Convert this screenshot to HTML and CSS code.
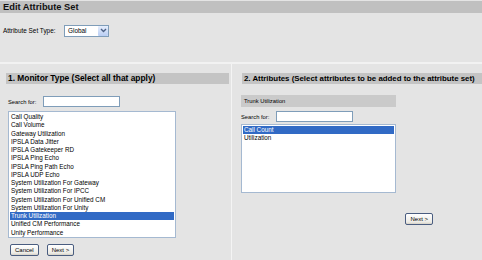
FILE: index.html
```html
<!DOCTYPE html>
<html>
<head>
  <title>Edit Attribute Set</title>
  <link rel="stylesheet" href="styles.css">
</head>
<body>

<div class="titlebar">Edit Attribute Set</div>

<div class="typerow">
  <span class="label">Attribute Set Type:</span>
  <div class="select">
    <span class="select-text">Global</span>
    <span class="select-arrow">
      <svg width="9" height="9" viewBox="0 0 9 9"><path d="M2 3 L4.5 5.5 L7 3" fill="none" stroke="#4d6185" stroke-width="1.4"/></svg>
    </span>
  </div>
</div>

<div class="panels">
  <!-- Left: monitor types -->
  <div class="panel left">
    <div class="panel-head">1. Monitor Type (Select all that apply)</div>
    <div class="search">
      <span class="label">Search for:</span>
      <input type="text" class="search-box wide">
    </div>
    <ul class="listbox big">
      <li>Call Quality</li>
      <li>Call Volume</li>
      <li>Gateway Utilization</li>
      <li>IPSLA Data Jitter</li>
      <li>IPSLA Gatekeeper RD</li>
      <li>IPSLA Ping Echo</li>
      <li>IPSLA Ping Path Echo</li>
      <li>IPSLA UDP Echo</li>
      <li>System Utilization For Gateway</li>
      <li>System Utilization For IPCC</li>
      <li>System Utilization For Unified CM</li>
      <li>System Utilization For Unity</li>
      <li class="sel">Trunk Utilization</li>
      <li>Unified CM Performance</li>
      <li>Unity Performance</li>
    </ul>
    <div class="buttons">
      <button type="button" class="btn">Cancel</button>
      <button type="button" class="btn">Next &gt;</button>
    </div>
  </div>

  <!-- Right: attributes -->
  <div class="panel right">
    <div class="panel-head">2. Attributes (Select attributes to be added to the attribute set)</div>
    <div class="subhead">Trunk Utilization</div>
    <div class="search">
      <span class="label">Search for:</span>
      <input type="text" class="search-box">
    </div>
    <ul class="listbox small">
      <li class="sel">Call Count</li>
      <li>Utilization</li>
    </ul>
    <div class="right-next">
      <button type="button" class="btn">Next &gt;</button>
    </div>
  </div>
</div>

</body>
</html>
```

FILE: styles.css
```css
body {
  margin: 0;
  background-color: #e4e4e4;
  font-family: "Liberation Sans", Arial, sans-serif;
  font-size: 5.8px;
  color: #000;
  width: 482px;
  height: 260px;
  overflow: hidden;
}

.titlebar {
  margin-top: 1px;
  height: 12px;
  line-height: 12px;
  padding-left: 3px;
  background-color: #c0c0c0;
  font-size: 9.3px;
  font-weight: bold;
  color: #111;
}

.typerow {
  display: flex;
  align-items: center;
  padding: 11px 0 0 3px;
  height: 13px;
  font-size: 6.4px;
}
.typerow .label {
  width: 61px;
}
.select {
  display: flex;
  align-items: center;
  width: 45px;
  height: 12px;
  border: 1px solid #7f9db9;
  background: #fff;
  box-sizing: border-box;
}
.select-text {
  flex: 1;
  padding-left: 3px;
}
.select-arrow {
  width: 10px;
  height: 10px;
  background: linear-gradient(#e6eefc, #b9cdf3);
  border-radius: 1px;
  display: flex;
  align-items: center;
  justify-content: center;
}
.select-arrow svg {
  display: block;
}

.panels {
  display: flex;
  margin-top: 25px;
  border-top: 2px solid #f2f2f2;
  height: 198px;
}
.panel.left {
  flex: 0 0 auto;
  width: 223px;
  padding: 9px 2px 0 6px;
  border-right: 1px solid #f4f4f4;
}
.panel.right {
  flex: 1;
  min-width: 0;
  padding: 9px 0 0 9px;
}

.panel-head {
  height: 11px;
  line-height: 11px;
  background-color: #c4c4c4;
  font-weight: bold;
  font-size: 8.4px;
  padding-left: 2px;
  white-space: nowrap;
  overflow: hidden;
}
.panel.right .panel-head {
  margin-left: 1px;
  font-size: 7.85px;
}

.subhead {
  width: 152px;
  height: 12px;
  line-height: 12px;
  margin-top: 11px;
  padding-left: 3px;
  background-color: #cacaca;
}

.search {
  display: flex;
  align-items: center;
  padding-left: 2px;
  margin-top: 12px;
  height: 11px;
}
.panel.right .search {
  margin-top: 4px;
  padding-left: 0;
}
.search .label {
  width: 35px;
}
.search-box {
  width: 77px;
  height: 11px;
  margin: 0;
  padding: 0;
  border: 1px solid #7f9db9;
  background: #fff;
  box-sizing: border-box;
}

.listbox {
  list-style: none;
  margin: 4px 0 0 2px;
  padding: 1px;
  width: 168px;
  background: #fff;
  border: 1px solid #a5b9d1;
  box-sizing: border-box;
  font-size: 6.3px;
}
.listbox.big {
  height: 127px;
}
.listbox.small {
  width: 155px;
  height: 69px;
  margin: 2px 0 0 0;
}
.listbox li {
  height: 8.27px;
  line-height: 8.27px;
  padding-left: 1px;
  white-space: nowrap;
}
.listbox li.sel {
  background-color: #316ac5;
  color: #fff;
}

.buttons {
  display: flex;
  gap: 8px;
  margin: 6px 0 0 4px;
}
.btn {
  height: 12px;
  padding: 0 4px;
  margin: 0;
  font-family: "Liberation Sans", Arial, sans-serif;
  font-size: 6px;
  line-height: 10px;
  border: 1px solid #4a5d80;
  border-radius: 2px;
  background: linear-gradient(#ffffff, #ecebe6 80%, #d6d0c5);
  color: #000;
}

.right-next {
  display: flex;
  justify-content: flex-end;
  padding-right: 49px;
  margin-top: 20px;
}
```
